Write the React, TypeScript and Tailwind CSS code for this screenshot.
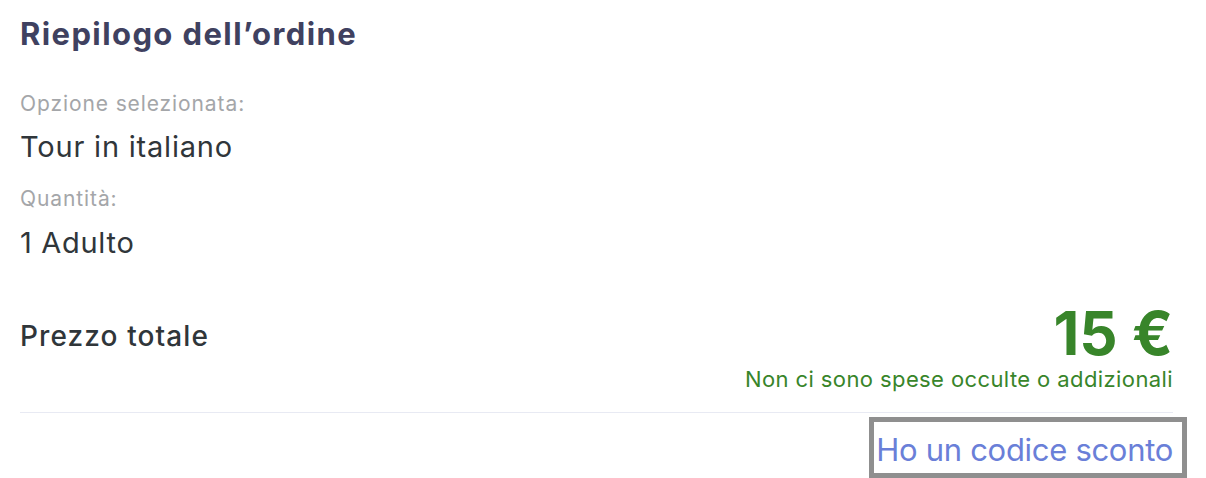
import React from "react";

export default function App() {
  return (
    <div
      className="w-[1206px] h-[478px] bg-white overflow-hidden pl-[20px] pr-[33px]"
      style={{ fontFamily: "Inter, 'Noto Sans', sans-serif" }}
    >
      <h2 className="pt-[14px] text-[31px] leading-[40px] font-bold tracking-[1.4px] text-[#3f4160]">
        Riepilogo dell’ordine
      </h2>
      <div className="mt-[36px] text-[21px] leading-[28px] tracking-[0.9px] text-[#a4a6a9]">Opzione selezionata:</div>
      <div className="mt-[11px] text-[29px] leading-[36px] tracking-[0.8px] text-[#30363a]">Tour in italiano</div>
      <div className="mt-[20px] text-[21px] leading-[28px] tracking-[0.9px] text-[#a4a6a9]">Quantità:</div>
      <div className="mt-[12px] text-[29px] leading-[36px] tracking-[0.7px] text-[#30363a]">1 Adulto</div>
      <div className="mt-[41px] flex items-start justify-between">
        <div className="mt-[16px] text-[28px] leading-[36px] font-medium tracking-[1.1px] text-[#30363a]">Prezzo totale</div>
        <div className="flex flex-col items-end">
          <div className="text-[60px] leading-[62px] font-bold text-[#38852a]">15 €</div>
          <div className="mt-[0px] text-[22px] leading-[30px] tracking-[0.4px] text-[#38852a]">
            Non ci sono spese occulte o addizionali
          </div>
        </div>
      </div>
      <div className="mt-[18px] border-t border-[#e8eaf3]" />
      <div className="flex justify-end mt-[4px]">
        <button className="-mr-[14px] border-[5px] border-[#8f8f8f] pl-[2px] pr-[9px] pt-[4px] h-[61px] text-[31px] leading-[47px] tracking-[-0.3px] text-[#6a7fd8]">
          Ho un codice sconto
        </button>
      </div>
    </div>
  );
}
